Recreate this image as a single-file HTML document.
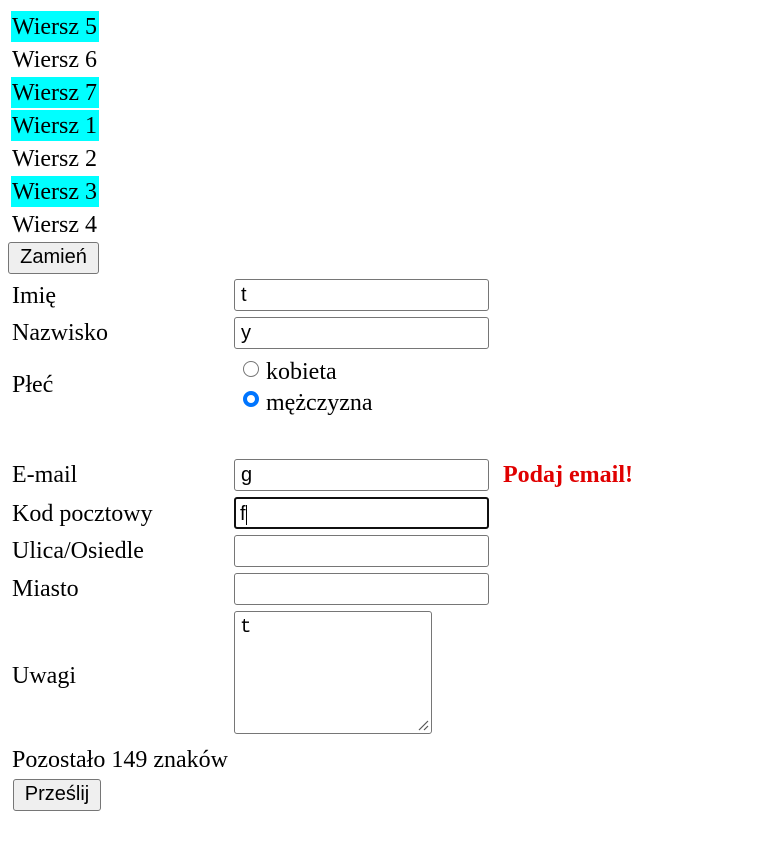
<!DOCTYPE html>
<html><head><meta charset="utf-8"><style>
body{margin:0;width:769px;height:862px;background:#fff;position:relative;font-family:"Liberation Serif",serif;font-size:24px;color:#000}
.a{position:absolute;white-space:nowrap}
.t{line-height:26px;height:26px}
.row{position:absolute;left:11px;width:88px;height:31px;line-height:32px;padding-left:1px;box-sizing:border-box;white-space:nowrap}
.cy{background:#00ffff}
.btn{position:absolute;background:#efefef;border:1px solid #767676;border-radius:3px;box-sizing:border-box;font-family:"Liberation Sans",sans-serif;font-size:20px;text-align:center;line-height:29px}
.in{position:absolute;left:234px;width:255px;height:32px;border:1px solid #767676;border-radius:3px;box-sizing:border-box;font-family:"Liberation Sans",sans-serif;font-size:20px;line-height:30px;padding-left:6px}
.rad{position:absolute;width:16px;height:16px;border-radius:50%;box-sizing:border-box}
</style></head><body>
<div class="row cy" style="top:11px">Wiersz 5</div>
<div class="row" style="top:44px">Wiersz 6</div>
<div class="row cy" style="top:77px">Wiersz 7</div>
<div class="row cy" style="top:110px">Wiersz 1</div>
<div class="row" style="top:143px">Wiersz 2</div>
<div class="row cy" style="top:176px">Wiersz 3</div>
<div class="row" style="top:209px">Wiersz 4</div>
<div class="btn" style="left:8px;top:242px;width:91px;height:32px">Zamień</div>

<div class="a t" style="left:12px;top:283px">Imię</div>
<div class="in" style="top:279px">t</div>
<div class="a t" style="left:12px;top:320px">Nazwisko</div>
<div class="in" style="top:317px">y</div>
<div class="a t" style="left:12px;top:372px">Płeć</div>
<div class="rad" style="left:243px;top:361px;border:1px solid #767676"></div>
<div class="a t" style="left:266px;top:359px">kobieta</div>
<div class="rad" style="left:243px;top:391px;border:4px solid #0075ff;background:#fff"></div>
<div class="a t" style="left:266px;top:390px">mężczyzna</div>

<div class="a t" style="left:12px;top:462px">E-mail</div>
<div class="in" style="top:459px">g</div>
<div class="a t" style="left:503px;top:462px;color:#e00000;font-weight:bold">Podaj email!</div>
<div class="a t" style="left:12px;top:501px">Kod pocztowy</div>
<div class="in" style="top:497px;border:2px solid #101010;padding-left:4px">f<span style="display:inline-block;width:1px;height:20px;background:#000;vertical-align:middle"></span></div>
<div class="a t" style="left:12px;top:538px">Ulica/Osiedle</div>
<div class="in" style="top:535px"></div>
<div class="a t" style="left:12px;top:576px">Miasto</div>
<div class="in" style="top:573px"></div>
<div class="a t" style="left:12px;top:663px">Uwagi</div>
<div class="a" style="left:234px;top:611px;width:198px;height:123px;border:1px solid #767676;border-radius:3px;box-sizing:border-box;font-family:'Liberation Mono',monospace;font-size:19px;padding:4px 5px;line-height:22px">t
<svg style="position:absolute;right:2px;bottom:2px" width="12" height="12"><path d="M11 2L2 11M11 7L7 11" stroke="#555" stroke-width="1.2"/></svg></div>
<div class="a t" style="left:12px;top:747px">Pozostało 149 znaków</div>
<div class="btn" style="left:13px;top:779px;width:88px;height:32px">Prześlij</div>
</body></html>
